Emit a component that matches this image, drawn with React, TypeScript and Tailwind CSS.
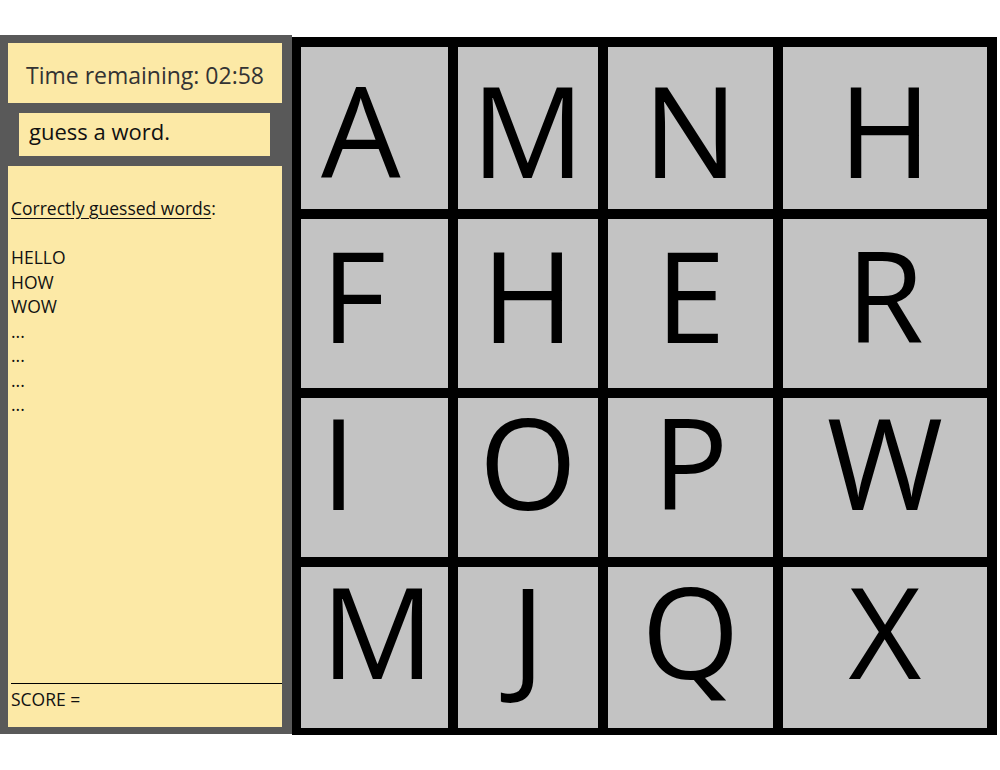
/**
 * Word grid game screen: timer + guess panel on the left, 4x4 letter board on the right.
 */

const rows: { letters: string[]; pad: string }[] = [
  { letters: ["A", "M", "N", "H"], pad: "pt-[19px]" },
  { letters: ["F", "H", "E", "R"], pad: "pt-[12px]" },
  { letters: ["I", "O", "P", "W"], pad: "pt-0" },
  { letters: ["M", "J", "Q", "X"], pad: "pt-0" },
];

const guessed = ["HELLO", "HOW", "WOW", "...", "...", "...", "..."];

function SidePanel() {
  return (
    <aside className="w-[292px] h-[699px] shrink-0 bg-[#595959] pl-[8px] pt-[8px] pr-[10px] pb-[7px]">
      <div className="h-full bg-[#fce9a6] flex flex-col">
        {/* Timer */}
        <div className="h-[60px] pt-[20px] text-center text-[23px] leading-[24px] text-[#333333]">
          Time remaining: 02:58
        </div>

        {/* Guess input */}
        <div className="bg-[#595959] pl-[11px] pr-[12px] py-[10px]">
          <div className="h-[43px] bg-[#fce9a6] pl-[10px] pt-[7px] text-[22px] leading-[22px] text-[#111]">
            guess a word.
          </div>
        </div>

        {/* Guessed words */}
        <div className="pt-[30px] pl-[3px] text-[17.5px] leading-[24.5px] text-[#111]">
          <p>
            <span className="underline underline-offset-[3px]">Correctly guessed words</span>:
          </p>
          <p>&nbsp;</p>
          {guessed.map((w, i) => (
            <p key={i}>{w}</p>
          ))}
        </div>

        {/* Score */}
        <div className="mt-auto ml-[3px] h-[44px] border-t border-black pt-[3px] text-[17.5px] leading-[24.5px] text-[#111]">
          SCORE =
        </div>
      </div>
    </aside>
  );
}

function Board() {
  return (
    <div className="mt-[2px] w-[705px] h-[698px] shrink-0 bg-black pl-[9px] pt-[10px] pr-[10px] pb-[7px] grid grid-cols-[147px_140px_165px_204px] grid-rows-[162px_169px_159px_161px] gap-[10px]">
      {rows.map((row, r) =>
        row.letters.map((letter, c) => (
          <div
            key={`${r}-${c}`}
            className={`bg-[#c3c3c3] text-[126px] leading-[126px] text-black ${row.pad} ${
              c === 0 ? "text-left pl-[20px]" : "text-center"
            }`}
          >
            {letter}
          </div>
        ))
      )}
    </div>
  );
}

export default function App() {
  return (
    <div className="w-[1000px] h-[770px] bg-white pt-[35px] flex font-['Open_Sans',sans-serif]">
      <SidePanel />
      <Board />
    </div>
  );
}
